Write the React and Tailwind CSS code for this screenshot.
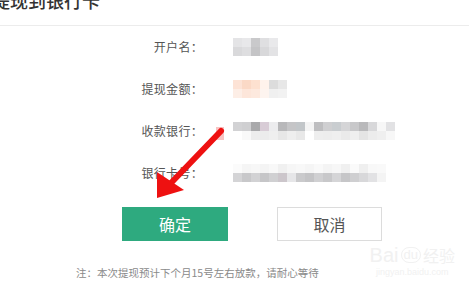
import React from "react";

const font = { fontFamily: '"Noto Sans CJK SC", "Noto Sans", sans-serif' };

// pixelated (mosaic) placeholder for the blurred values
function Mosaic({ top, bottom }) {
  return (
    <div className="flex flex-col">
      <div className="flex">
        {top.map((c, i) => (
          <div key={i} className="h-[9px] w-[9px]" style={{ background: c }} />
        ))}
      </div>
      <div className="flex">
        {bottom.map((c, i) => (
          <div key={i} className="h-[9px] w-[9px]" style={{ background: c }} />
        ))}
      </div>
    </div>
  );
}

const rows = [
  {
    label: "开户名：",
    top: ["#e4e4e6", "#e8e8ea", "#c9c9cb", "#dfdfe1", "#e9e9eb"],
    bottom: ["#d9d9db", "#dedee0", "#c4c4c6", "#d8d8da", "#e3e3e5"],
  },
  {
    label: "提现金额：",
    top: ["#fde3d6", "#fbd9c6", "#fde1d0", "#fff3ec", "#dcdcdc", "#e7e7e7"],
    bottom: ["#fdeee6", "#fde6da", "#fde9de", "#fdf4ef", "#f0f0f0", "#f2f2f2"],
  },
  {
    label: "收款银行：",
    top: ["#d2d2d4", "#cfcfd1", "#a9a9ab", "#d8ccd6", "#ececee", "#b8b8ba", "#c5c5c7", "#c2c6c9", "#f4f4f4", "#bebec0", "#cfcfd1", "#c9cdd0", "#d5d5d7", "#c8c8ca", "#b9b9bb", "#d8d8da", "#f7f7f7", "#e2e2e4"],
    bottom: ["#ffffff", "#f9f9f9", "#ededed", "#ececec", "#efefef", "#e7e7e7", "#eeeeee", "#e8e8e8", "#ffffff", "#eeeeee", "#ededed", "#efefef", "#eaeaea", "#efefef", "#e4e4e4", "#ececec", "#efefef", "#f7f7f7"],
  },
  {
    label: "银行卡号：",
    top: ["#fbfbfb", "#f5f5f5", "#f7f7f7", "#f4f4f4", "#f8f8f8", "#f0f0f0", "#f6f6f6", "#f8f8f8", "#f5f5f5", "#f9f9f9", "#f4f4f4", "#f7f7f7", "#f0f0f0", "#fafafa", "#efefef", "#f8f8f8", "#f9f9f9"],
    bottom: ["#d4d4d6", "#c8c8ca", "#d2d2d4", "#c6c6c8", "#d0d0d2", "#ccc6cb", "#e6e6e8", "#cacacc", "#c4c4c6", "#d0d0d2", "#c8c8ca", "#d5d5d7", "#c6c6c8", "#cfcfd1", "#d8d8da", "#e2e2e4", "#f4f4f4"],
  },
];

export default function App() {
  return (
    <div className="relative h-[290px] w-[469px] overflow-hidden bg-white" style={font}>
      {/* Header */}
      <div className="h-[26px] border-b border-[#ececec]">
        <h2 className="relative -top-[10px] -left-[8px] text-[18px] leading-[20px] font-medium text-[#333]">
          提现到银行卡
        </h2>
      </div>

      {/* Form */}
      <div className="flex flex-col">
        {rows.map((r) => (
          <div key={r.label} className="flex h-[42px] items-center">
            <div className="w-[203px] text-right text-[12px] text-[#555] tracking-[0.3px]">{r.label}</div>
            <div className="ml-[30px]">
              <Mosaic top={r.top} bottom={r.bottom} />
            </div>
          </div>
        ))}
      </div>

      {/* Buttons */}
      <div className="mt-[13px] flex gap-[49px] pl-[122px]">
        <button className="h-[34px] w-[106px] bg-[#2eaa7f] text-[16px] text-white">确定</button>
        <button className="h-[34px] w-[105px] border border-[#dcdcdc] bg-white text-[16px] text-[#555]">
          取消
        </button>
      </div>

      {/* Note */}
      <p className="mt-[24px] pl-[76px] text-[10.5px] leading-[16px] text-[#8a8a8a]">
        注：本次提现预计下个月15号左右放款，请耐心等待
      </p>

      {/* Watermark */}
      <div className="absolute right-[14px] top-[244px] flex flex-col items-center text-[#f1f1f1]">
        <div className="flex items-center gap-[2px] text-[20px] leading-[22px]" style={{ fontFamily: '"Liberation Sans", sans-serif' }}>
          <span>Bai</span>
          <span className="rounded-full border border-[#f1f1f1] px-[2px] text-[13px] leading-[14px]">du</span>
          <span className="text-[16px]" style={font}>经验</span>
        </div>
        <div className="text-[9px] leading-[12px]" style={{ fontFamily: '"Liberation Sans", sans-serif' }}>
          jingyan.baidu.com
        </div>
      </div>

      {/* Red annotation arrow */}
      <div className="absolute left-[216px] top-[127px] h-[13px] w-[8px] bg-[#f6b4b4] opacity-80" />
      <svg className="absolute left-0 top-0" width="469" height="290" viewBox="0 0 469 290">
        <line x1="221" y1="131" x2="170" y2="184" stroke="#ee1111" strokeWidth="6" strokeLinecap="round" />
        <polygon points="157,198 157,172 184,190" fill="#ee1111" />
      </svg>
    </div>
  );
}
